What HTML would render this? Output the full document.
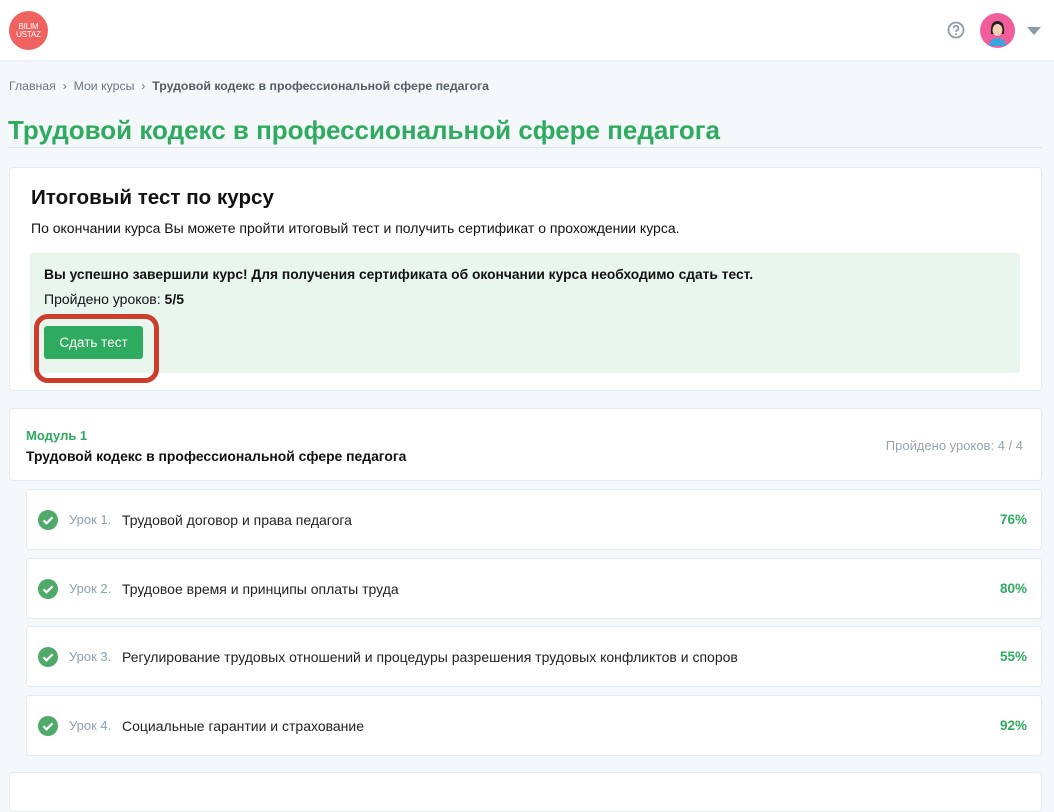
<!DOCTYPE html>
<html><head><meta charset="utf-8"><style>
*{box-sizing:border-box;margin:0;padding:0}
body{width:1054px;height:784px;overflow:hidden;background:#f5f8fb;font-family:"Liberation Sans","DejaVu Sans",sans-serif;color:#111;position:relative}
.abs{position:absolute}
.hdr{left:0;top:0;width:1054px;height:60px;background:#fff;box-shadow:0 1px 3px rgba(0,0,0,.05)}
.logo{left:9px;top:11px;width:39px;height:39px;border-radius:50%;background:#f0625f;color:#fff;font-size:8px;line-height:8px;text-align:center;padding-top:12px;letter-spacing:-.2px}
.bc{left:9px;top:79px;font-size:12.3px;color:#6b7580}
.bc b{color:#555d66}
h1{position:absolute;left:8px;top:115px;font-size:26px;color:#2eab5f;font-weight:bold;white-space:nowrap}
.line{left:8px;top:147px;width:1034px;height:1px;background:#dde3e8}
.card{background:#fff;border:1px solid #e6ebef;border-radius:4px}
.c1{left:9px;top:167px;width:1033px;height:224px}
.c1 h2{position:absolute;left:21px;top:18px;font-size:20.6px;font-weight:bold}
.c1 p{position:absolute;left:21px;top:52px;font-size:14px}
.gb{left:30px;top:253px;width:990px;height:120px;background:#e9f6ed;border-radius:3px}
.gb .t1{position:absolute;left:14px;top:14px;font-size:13.8px;font-weight:bold}
.gb .t2{position:absolute;left:14px;top:38px;font-size:14px}
.btn{left:44px;top:326px;width:99px;height:33px;background:#2eab5f;border-radius:3px;color:#fff;font-size:13.5px;text-align:center;line-height:33px}
.red{left:34px;top:314px;width:125px;height:69px;border:5px solid #cc3d2c;border-radius:14px}
.mod{left:9px;top:408px;width:1033px;height:73px}
.mod .a{position:absolute;left:16px;top:19px;color:#2eab5f;font-size:13px;font-weight:bold}
.mod .b{position:absolute;left:16px;top:39px;font-size:13.9px;font-weight:bold;color:#111}
.mod .r{position:absolute;right:18px;top:29px;font-size:13px;color:#9aa3ab}
.ls{left:26px;width:1016px;height:61px}
.ls .ck{position:absolute;left:11px;top:20px;width:20px;height:20px;border-radius:50%;background:#4faa69}
.ls .n{position:absolute;left:42px;top:22px;font-size:13px;color:#8e9fae}
.ls .tx{position:absolute;left:95px;top:22px;font-size:14px;color:#222}
.ls .p{position:absolute;right:14px;top:22px;font-size:13.5px;font-weight:bold;color:#2eab5f}
</style></head><body>
<div class="abs hdr"></div>
<div class="abs logo">BILIM<br>USTAZ</div>
<svg class="abs" style="left:947px;top:21px" width="18" height="18" viewBox="0 0 18 18"><circle cx="9" cy="9" r="7.5" fill="none" stroke="#8e9aa6" stroke-width="1.8"/><path d="M6.6 7.2a2.4 2.4 0 1 1 3.4 2.1c-.7.4-1 .8-1 1.6" fill="none" stroke="#8e9aa6" stroke-width="1.8"/><circle cx="9" cy="13.1" r="1" fill="#8e9aa6"/></svg>
<svg class="abs" style="left:980px;top:13px" width="35" height="35" viewBox="0 0 35 35"><circle cx="17.5" cy="17.5" r="17.5" fill="#f25e9c"/><path d="M9 33 Q10 25 17.5 25 Q25 25 26 33 Z" fill="#3aa5dc"/><path d="M11 21 Q10 8 17.5 8 Q25 8 24 21 Z" fill="#222"/><ellipse cx="17.5" cy="17" rx="5" ry="6" fill="#f5cfb3"/><path d="M12 13 Q17 8 23 13 L23 11 Q17 6 12 11Z" fill="#222"/></svg>
<svg class="abs" style="left:1027px;top:27px" width="14" height="8"><path d="M0 0H14L7 8Z" fill="#8e9aa6"/></svg>
<div class="abs bc">Главная&nbsp; › &nbsp;Мои курсы&nbsp; › &nbsp;<b>Трудовой кодекс в профессиональной сфере педагога</b></div>
<h1>Трудовой кодекс в профессиональной сфере педагога</h1>
<div class="abs line"></div>
<div class="abs card c1"><h2>Итоговый тест по курсу</h2><p>По окончании курса Вы можете пройти итоговый тест и получить сертификат о прохождении курса.</p></div>
<div class="abs gb"><div class="t1">Вы успешно завершили курс! Для получения сертификата об окончании курса необходимо сдать тест.</div><div class="t2">Пройдено уроков: <b>5/5</b></div></div>
<div class="abs btn">Сдать тест</div>
<div class="abs red"></div>
<div class="abs card mod"><div class="a">Модуль 1</div><div class="b">Трудовой кодекс в профессиональной сфере педагога</div><div class="r">Пройдено уроков: 4 / 4</div></div>

<div class="abs card ls" style="top:489px"><div class="ck"><svg width="20" height="20"><path d="M5.5 10.3l3 3 6-6" fill="none" stroke="#fff" stroke-width="2.2"/></svg></div><div class="n">Урок 1.</div><div class="tx">Трудовой договор и права педагога</div><div class="p">76%</div></div>
<div class="abs card ls" style="top:558px"><div class="ck"><svg width="20" height="20"><path d="M5.5 10.3l3 3 6-6" fill="none" stroke="#fff" stroke-width="2.2"/></svg></div><div class="n">Урок 2.</div><div class="tx">Трудовое время и принципы оплаты труда</div><div class="p">80%</div></div>
<div class="abs card ls" style="top:626px"><div class="ck"><svg width="20" height="20"><path d="M5.5 10.3l3 3 6-6" fill="none" stroke="#fff" stroke-width="2.2"/></svg></div><div class="n">Урок 3.</div><div class="tx">Регулирование трудовых отношений и процедуры разрешения трудовых конфликтов и споров</div><div class="p">55%</div></div>
<div class="abs card ls" style="top:695px"><div class="ck"><svg width="20" height="20"><path d="M5.5 10.3l3 3 6-6" fill="none" stroke="#fff" stroke-width="2.2"/></svg></div><div class="n">Урок 4.</div><div class="tx">Социальные гарантии и страхование</div><div class="p">92%</div></div>
<div class="abs card" style="left:9px;top:772px;width:1033px;height:40px"></div>
</body></html>
